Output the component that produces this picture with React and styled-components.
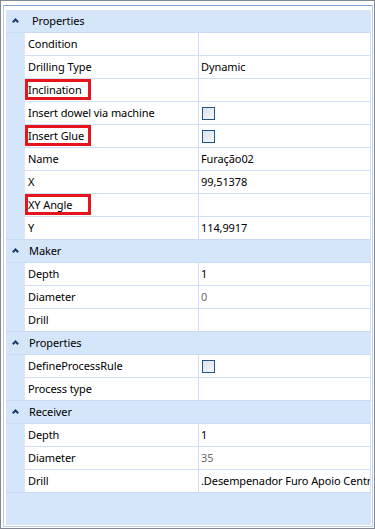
import styled, { createGlobalStyle, css } from "styled-components";

const GlobalStyle = createGlobalStyle`
  html, body {
    margin: 0;
    padding: 0;
  }
  body {
    font-family: "Segoe UI", "Noto Sans", sans-serif;
    font-size: 11px;
    letter-spacing: -0.1px;
    color: #000;
  }
`;

const Frame = styled.div`
  width: 375px;
  height: 529px;
  box-sizing: border-box;
  border: 1px solid #828790;
  padding: 4px 1px 1px 2px;
  background: #fff;
  display: flex;
  flex-direction: column;
`;

const Panel = styled.div`
  flex: 1;
  border: 1px solid #b9cfeb;
  border-top-color: #7ea6d8;
  padding: 4px 1px 1px 2px;
  background: #fff;
  display: flex;
  flex-direction: column;
`;

const Canvas = styled.div`
  flex: 1;
  background: #d5e5fa;
  overflow: hidden;
`;

const Group = styled.div`
  border-bottom: 1px solid #c8dbf3;
`;

const Header = styled.div`
  height: 22px;
  box-sizing: border-box;
  border-bottom: 1px solid #cadcf3;
  display: flex;
  align-items: center;
  padding: 0 0 1px 6px;
  height: 23px;
  svg {
    display: block;
  }
`;

const HeaderText = styled.span`
  margin-left: ${(p) => (p.$focused ? 13 : 10)}px;
`;

const Row = styled.div`
  display: grid;
  grid-template-columns: 18px 174px 1fr;
  height: 23px;
  &:last-child {
    height: 22px;
  }
`;

const cellLine = css`
  background: #fff;
  border-bottom: 1px solid #cfe0f5;
  padding-bottom: 1px;
  ${Row}:last-child > & {
    border-bottom: none;
  }
`;

const NameCell = styled.div`
  ${cellLine};
  position: relative;
  border-left: 1px solid #dbe7f6;
  padding-left: 3px;
  display: flex;
  align-items: center;
  white-space: nowrap;
  ${(p) =>
    p.$marked &&
    css`
      &::after {
        content: "";
        position: absolute;
        left: 0;
        top: 0;
        width: 66px;
        height: 21px;
        box-sizing: border-box;
        border: 3px solid #e5141d;
      }
    `}
`;

const ValueCell = styled.div`
  ${cellLine};
  border-left: 1px solid #cfe0f5;
  border-right: 1px solid #cfe0f5;
  padding-left: 2px;
  display: flex;
  align-items: center;
  white-space: nowrap;
  overflow: hidden;
  color: ${(p) => (p.$muted ? "#6d6d6d" : "#000")};
`;

const Check = styled.span`
  width: 13px;
  height: 13px;
  flex: none;
  box-sizing: border-box;
  border: 1px solid #1f5689;
  background: linear-gradient(135deg, #dbe1ea 0%, #f6f8fb 100%);
  margin: 1px 0 0 1px;
`;

const Chevron = () => (
  <svg width="7" height="5" viewBox="0 0 7 5">
    <path d="M0.8 4.3 L3.5 1.5 L6.2 4.3" fill="none" stroke="#1c3b6b" strokeWidth="2" />
  </svg>
);

const groups = [
  {
    title: "Properties",
    focused: true,
    rows: [
      { name: "Condition" },
      { name: "Drilling Type", value: "Dynamic" },
      { name: "Inclination", marked: true },
      { name: "Insert dowel via machine", check: true },
      { name: "Insert Glue", marked: true, check: true },
      { name: "Name", value: "Furação02" },
      { name: "X", value: "99,51378" },
      { name: "XY Angle", marked: true },
      { name: "Y", value: "114,9917" },
    ],
  },
  {
    title: "Maker",
    rows: [
      { name: "Depth", value: "1" },
      { name: "Diameter", value: "0", muted: true },
      { name: "Drill" },
    ],
  },
  {
    title: "Properties",
    rows: [
      { name: "DefineProcessRule", check: true },
      { name: "Process type" },
    ],
  },
  {
    title: "Receiver",
    rows: [
      { name: "Depth", value: "1" },
      { name: "Diameter", value: "35", muted: true },
      { name: "Drill", value: ".Desempenador Furo Apoio Centr" },
    ],
  },
];

const App = () => {
  return (
    <>
      <GlobalStyle />
      <Frame>
        <Panel>
          <Canvas>
            {groups.map((g, i) => (
              <Group key={i}>
                <Header>
                  <Chevron />
                  <HeaderText $focused={g.focused}>{g.title}</HeaderText>
                </Header>
                {g.rows.map((r, j) => (
                  <Row key={j}>
                    <span />
                    <NameCell $marked={r.marked}>{r.name}</NameCell>
                    <ValueCell $muted={r.muted}>
                      {r.check ? <Check /> : r.value}
                    </ValueCell>
                  </Row>
                ))}
              </Group>
            ))}
          </Canvas>
        </Panel>
      </Frame>
    </>
  );
};

export default App;
